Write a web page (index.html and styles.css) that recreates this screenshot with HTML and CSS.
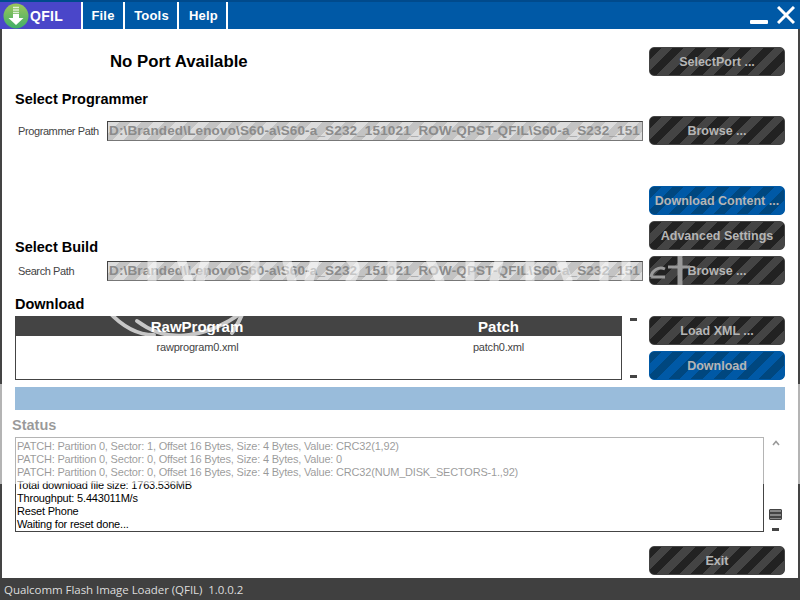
FILE: index.html
```html
<!DOCTYPE html>
<html lang="en">
<head>
<meta charset="utf-8">
<title>QFIL</title>
<link rel="stylesheet" href="styles.css">
</head>
<body>
<div class="window">
  <header class="titlebar">
    <div class="brand">
      <svg class="logo" viewBox="0 0 26 26" width="26" height="26" aria-hidden="true">
        <defs><linearGradient id="lg" x1="0" y1="0" x2="0" y2="1"><stop offset="0" stop-color="#9cc65a"/><stop offset="1" stop-color="#3fae6a"/></linearGradient></defs>
        <circle cx="13" cy="13" r="12.5" fill="url(#lg)"/>
        <path d="M10 4.5h6M10 7h6M10 9.5h6" stroke="#fff" stroke-width="1.3" opacity=".75"/>
        <path d="M10 11h6v4h4.5L13 22 5.5 15H10z" fill="#fff"/>
      </svg>
      <span class="brand-name">QFIL</span>
    </div>
    <nav class="menu">
      <span class="menu-item menu-file">File</span>
      <span class="menu-item menu-tools">Tools</span>
      <span class="menu-item menu-help">Help</span>
    </nav>
    <div class="winctl">
      <span class="win-min"></span>
      <svg class="win-close" viewBox="0 0 18 18" width="18" height="18" aria-hidden="true"><path d="M1 1l16 16M17 1L1 17" stroke="#fff" stroke-width="3"/></svg>
    </div>
  </header>

  <main class="content">
    <div class="upper">
      <div class="left">
        <div class="port">No Port Available</div>
        <h2 class="heading h-prog">Select Programmer</h2>
        <div class="path-row r-prog">
          <span class="path-label">Programmer Path</span>
          <div class="path-input">D:\Branded\Lenovo\S60-a\S60-a_S232_151021_ROW-QPST-QFIL\S60-a_S232_151</div>
        </div>
        <h2 class="heading h-build">Select Build</h2>
        <div class="path-row r-build">
          <span class="path-label">Search Path</span>
          <div class="path-input">D:\Branded\Lenovo\S60-a\S60-a_S232_151021_ROW-QPST-QFIL\S60-a_S232_151</div>
        </div>
        <h2 class="heading h-down">Download</h2>
        <div class="table-row">
          <div class="table">
            <div class="thead"><span>RawProgram</span><span>Patch</span></div>
            <div class="tbody"><span>rawprogram0.xml</span><span>patch0.xml</span></div>
          </div>
          <div class="ticks"><span class="tick"></span><span class="tick"></span></div>
        </div>
      </div>
      <div class="right">
        <button class="btn b-port">SelectPort ...</button>
        <button class="btn b-gap40">Browse ...</button>
        <button class="btn blue b-gap41">Download Content ...</button>
        <button class="btn b-gap6">Advanced Settings</button>
        <button class="btn b-gap6">Browse ...</button>
        <button class="btn b-gap31">Load XML ...</button>
        <button class="btn blue b-gap6">Download</button>
      </div>
    </div>

    <div class="progress"></div>
    <h2 class="heading h-status">Status</h2>
    <div class="status-row">
      <div class="log">
        <div>PATCH: Partition 0, Sector: 1, Offset 16 Bytes, Size: 4 Bytes, Value: CRC32(1,92)</div>
        <div>PATCH: Partition 0, Sector: 0, Offset 16 Bytes, Size: 4 Bytes, Value: 0</div>
        <div>PATCH: Partition 0, Sector: 0, Offset 16 Bytes, Size: 4 Bytes, Value: CRC32(NUM_DISK_SECTORS-1.,92)</div>
        <div>Total download file size: 1763.536MB</div>
        <div>Throughput: 5.443011M/s</div>
        <div>Reset Phone</div>
        <div>Waiting for reset done...</div>
      </div>
      <div class="scroll">
        <svg class="chev" viewBox="0 0 8 6" width="8" height="6" aria-hidden="true"><path d="M1 5l3-3.5L7 5" fill="none" stroke="#000" stroke-width="1.6"/></svg>
        <span class="grip"></span>
        <span class="tick"></span>
      </div>
    </div>
    <div class="exit-row"><button class="btn">Exit</button></div>
  </main>

  <footer class="footer">Qualcomm Flash Image Loader (QFIL)&nbsp; 1.0.0.2</footer>

  <svg class="watermark" viewBox="0 0 800 110" width="800" height="110" aria-hidden="true">
    <g fill="none" stroke="#fff" stroke-linecap="round">
      <g stroke-width="4" opacity=".7">
        <path d="M108 62q22 24 46 24"/>
        <path d="M137 72q24 18 52 14 28-4 52-22"/>
        <path d="M244 60q-4 12-12 24"/>
      </g>
      <g stroke-width="9" opacity=".5">
        <path d="M152 10v22M181 10l8 22M206 8l-6 24M255 10v22M286 8l6 24M315 10l-6 22"/>
        <path d="M350 10q10 10 0 22M392 8v24M430 10l10 22M470 9v22M500 8l-6 24M530 10v22M560 9l8 22M604 10v22M626 9v22"/>
      </g>
      <g stroke="#999" stroke-linecap="butt">
        <path d="M680 7v29" stroke-width="5"/>
        <path d="M668 18h22" stroke-width="3"/>
        <path d="M651 28a10 10 0 0 1 14-8M651 28h14" stroke-width="3"/>
      </g>
    </g>
  </svg>
  <div class="fade"></div>
</div>
</body>
</html>
```

FILE: styles.css
```css
* { box-sizing: border-box; }
html, body { margin: 0; padding: 0; }
body { width: 800px; height: 600px; overflow: hidden; background: #fff; font-family: "Liberation Sans", Arial, sans-serif; }

.window { position: relative; width: 800px; height: 600px; display: flex; flex-direction: column; background: #fff; border-left: 2px solid #444; border-right: 2px solid #444; }

.titlebar { flex: none; height: 29px; margin: 0 -2px; display: flex; background: #0059a6; border-top: 2px solid #004a8c; color: #fff; }
.brand { width: 83px; padding-left: 2px; display: flex; align-items: center; gap: 1px; background: #4a46c9; border-right: 2px solid #fff; }
.logo { flex: none; margin-left: 1px; }
.brand-name { font-size: 14px; font-weight: bold; letter-spacing: .3px; }
.menu { display: flex; }
.menu-item { display: flex; align-items: center; justify-content: center; font-size: 13px; font-weight: bold; border-right: 2px solid #fff; letter-spacing: .2px; }
.menu-file { width: 42px; }
.menu-tools { width: 54px; padding-left: 1px; }
.menu-help { width: 49px; padding-left: 2px; }
.winctl { margin-left: auto; display: flex; align-items: flex-end; gap: 9px; padding: 0 5px 5px 0; }
.win-min { width: 18px; height: 4px; background: #fff; border-radius: 1px; }
.win-close { display: block; }

.content { flex: 1; min-height: 0; padding: 0 13px; display: flex; flex-direction: column; }
.upper { display: flex; gap: 6px; }
.left { width: 628px; display: flex; flex-direction: column; }
.right { width: 136px; display: flex; flex-direction: column; }

.port { margin-top: 18px; height: 29px; padding-left: 95px; display: flex; align-items: center; font-size: 16.8px; font-weight: bold; color: #000; }
.heading { margin: 0; height: 18px; line-height: 18px; font-size: 14.5px; font-weight: bold; color: #000; }
.h-prog { margin-top: 14px; }
.h-build { margin-top: 97px; }
.h-down { margin-top: 14px; }
.h-status { margin: 6px 0 3px -3px; }

.path-row { height: 20px; display: flex; align-items: center; }
.r-prog { margin-top: 13px; }
.r-build { margin-top: 5px; }
.path-label { flex: none; width: 92px; padding-left: 3px; font-size: 11px; letter-spacing: -.4px; color: #444; white-space: nowrap; }
.path-input { flex: 1; min-width: 0; height: 20px; line-height: 18px; padding-left: 1px; overflow: hidden; white-space: nowrap; font-size: 13.5px; font-weight: bold; letter-spacing: .15px; color: #8b8b8b; border: 1px solid #777; border-top-color: #444; border-left-color: #444; background: repeating-linear-gradient(135deg, #dcdcdc 0 8px, #c3c3c3 8px 16px); }

.table-row { margin-top: 3px; height: 64px; display: flex; }
.table { width: 607px; display: flex; flex-direction: column; border: 1px solid #444; }
.thead, .tbody { display: grid; text-align: center; }
.thead { height: 20px; line-height: 21px; background: #444; color: #fff; font-size: 15px; font-weight: bold; margin: -1px -1px 0; padding-right: 4px; grid-template-columns: 364px 1fr; }
.tbody { padding: 3px 3px 0 0; font-size: 11px; letter-spacing: -.2px; line-height: 16px; color: #444; grid-template-columns: 363px 1fr; }
.ticks { margin-left: 8px; padding: 2px 0; display: flex; flex-direction: column; justify-content: space-between; }
.tick { display: block; width: 7px; height: 3px; background: #444; }

.btn { display: block; width: 136px; height: 29px; padding: 0; border: 1px solid #444; border-radius: 5px; font-family: inherit; font-size: 12.5px; font-weight: bold; color: #b5b5b5; background: repeating-linear-gradient(135deg, #222 0 8px, #444 8px 16px); white-space: nowrap; }
.btn.blue { border-color: #0059a6; background: repeating-linear-gradient(135deg, #00477f 0 8px, #0059a6 8px 16px); }
.b-port { margin-top: 18px; }
.b-gap40 { margin-top: 40px; }
.b-gap41 { margin-top: 41px; }
.b-gap6 { margin-top: 6px; }
.b-gap31 { margin-top: 31px; }

.progress { margin-top: 7px; height: 23px; background: #0059a6; }
.status-row { display: flex; height: 95px; }
.log { width: 749px; padding: 2px 1px; border: 1px solid #444; font-size: 11px; letter-spacing: -.19px; line-height: 13px; color: #000; overflow: hidden; white-space: nowrap; }
.scroll { flex: 1; display: flex; flex-direction: column; align-items: center; padding: 3px 0 0 2px; }
.chev { display: block; }
.grip { display: block; width: 13px; height: 11px; margin-top: 63px; border: 1px solid #444; border-radius: 1px; background: repeating-linear-gradient(180deg, #888 0 2px, #444 2px 4px); }
.scroll .tick { margin-top: 8px; }
.exit-row { margin-top: 14px; display: flex; justify-content: flex-end; }

.footer { flex: none; margin: 3px -2px 0; height: 22px; padding-left: 4px; line-height: 23px; background: #404040; color: #ddd; font-family: "Open Sans", sans-serif; font-size: 11.5px; letter-spacing: -.05px; white-space: nowrap; }

.watermark { position: absolute; left: -2px; top: 249px; pointer-events: none; }
.fade { position: absolute; left: -2px; right: -2px; top: 384px; height: 100px; background: rgba(255, 255, 255, .6); pointer-events: none; }
```
